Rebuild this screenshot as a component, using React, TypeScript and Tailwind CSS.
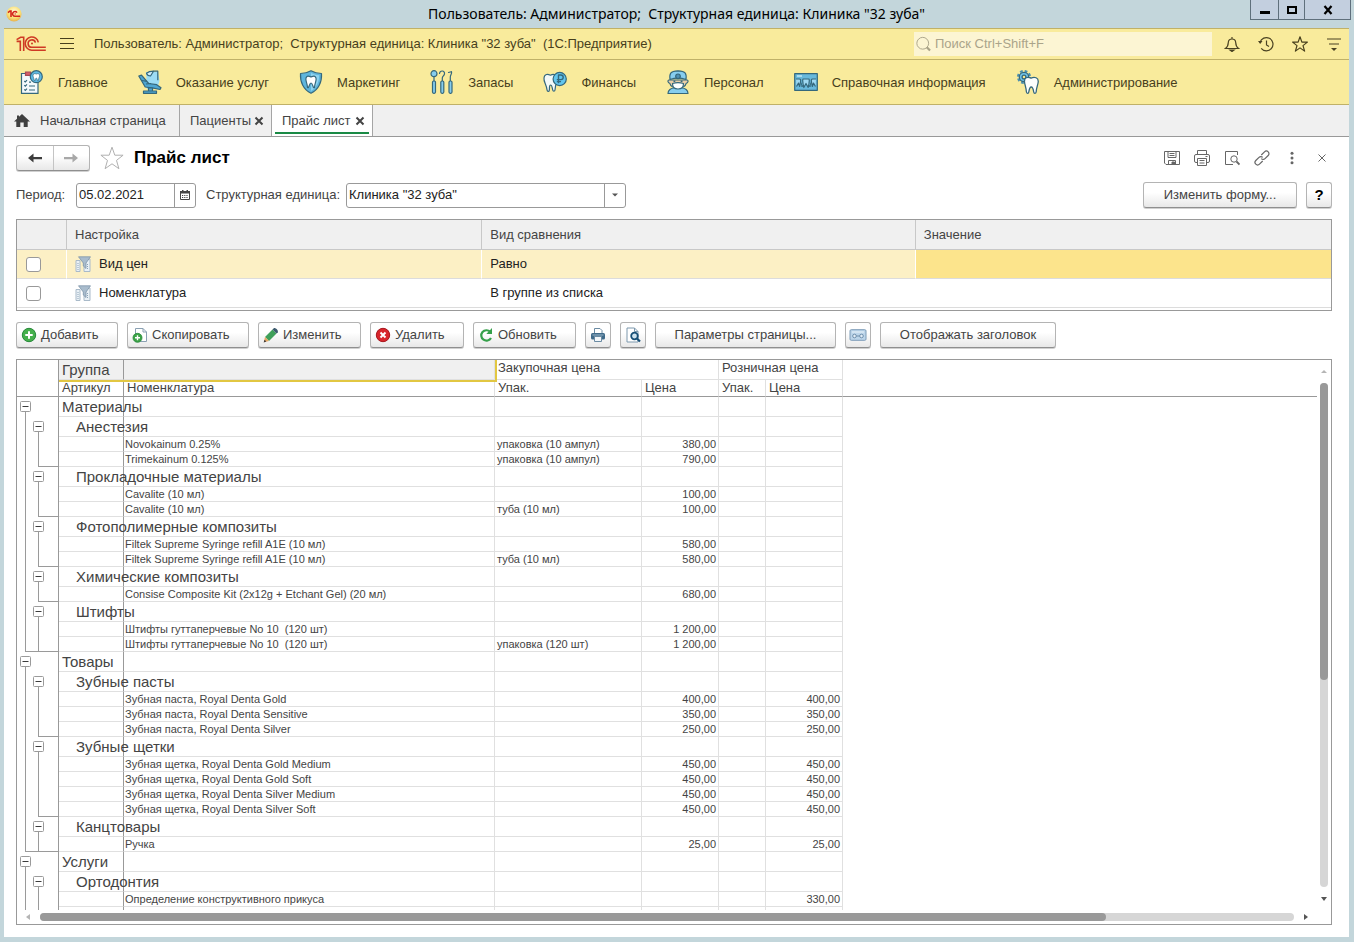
import React from "react";

type Svg = { className?: string };

const AppBadge = () => (
  <svg viewBox="0 0 16 16" className="size-4" aria-hidden="true">
    <defs>
      <radialGradient id="badge" cx="50%" cy="35%" r="65%">
        <stop offset="0" stopColor="#fffbe0" />
        <stop offset="0.6" stopColor="#fbe27a" />
        <stop offset="1" stopColor="#e8b04a" />
      </radialGradient>
    </defs>
    <circle cx="8" cy="8" r="7.6" fill="url(#badge)" />
    <path d="M2 6.6 4 5h1v6M7.5 10.2h6.6M11 6.6A2.4 2.4 0 1 0 9 10.3" stroke="#d4261c" strokeWidth="1.6" fill="none" />
    <circle cx="9.2" cy="7.9" r="0.7" fill="#d4261c" />
  </svg>
);

const Logo = () => (
  <svg viewBox="0 0 30 16" className="h-4 w-[30px]" fill="none" stroke="#cf3a24" strokeWidth="1.6" aria-hidden="true">
    <path d="M.6 3.6 4.6 1.300H7.700V15" />
    <path d="M.6 5.400H4.300V15" />
    <path d="M22.300 6.300A6.600 6.600 0 1 0 16 14.200H29.800" />
    <path d="M19.400 6.600A3.700 3.700 0 1 0 16 11.300H29.800" />
    <circle cx="16" cy="7.600" r="1" fill="#cf3a24" stroke="none" />
  </svg>
);

const line = "#35687c";
const sky = "#86cdee";

const IconMain = () => (
  <svg viewBox="0 0 24 24" className="size-6" fill="none" stroke={line} strokeWidth="1.2" aria-hidden="true">
    <path d="M1.500 3.500H18v19.800H1.500z" fill="#f4f9fb" />
    <path d="M5.500 2h5v3.400h-5z" fill="#d5606a" stroke="#a64a55" />
    <circle cx="16.300" cy="6.700" r="6" fill="#5fbbe6" />
    <path d="M13 5.200c.3-2 2-1.700 3.300-1.200 1.300-.5 3-.8 3.300 1.200.2 1.500-.9 2.500-1.200 5.300h-1c-.2-1.500-.5-2.300-1.100-2.300s-.9.8-1.100 2.300h-1C13.900 7.700 12.800 6.700 13 5.200z" fill="#fff" strokeWidth=".7" />
    <path d="m4.300 11 1 1L7 10.200M4.300 15.200l1 1L7 14.400M4.300 19.400l1 1L7 18.600M9 16h6M9 20h6M9 12.200h2" />
  </svg>
);

const IconChair = () => (
  <svg viewBox="0 0 24 24" className="size-6" fill={sky} stroke={line} strokeWidth="1.200" strokeLinejoin="round" aria-hidden="true">
    <path d="M8 2h12l1.500 9L19 19H9z" fill="#9cdcf5" stroke="none" />
    <path d="M15.500 1.200h4.300v9" fill="none" />
    <path d="M8.500 3.200c2-1.700 4.500-2 7-2L12.500 6c-2 0-3.500-1-4-2.800z" fill="#d4effa" />
    <path d="m.8 6 2.700-.8 7.200 8.300 8 1.200 4.300 3-1 1.800-6.500-1.300-8.300-1.200z" fill="#4ea6d2" />
    <path d="m4 10.500 5 .8M8 14l5-.5" fill="none" />
    <path d="M10.500 18h4v3h-4zM5.500 21h13v2.300h-13z" fill="#4ea6d2" />
  </svg>
);

const IconShield = () => (
  <svg viewBox="0 0 24 24" className="size-6" fill={sky} stroke={line} strokeWidth="1.2" strokeLinejoin="round" aria-hidden="true">
    <path d="M12 .8c3 1.800 6.500 2.700 10.500 2.700C23 12 19.500 20 12 23.300 4.500 20 1 12 1.500 3.500 5.500 3.500 9 2.600 12 .8z" fill="#5fb6dd" />
    <path d="M12 3c2.500 1.300 5 2 8.200 2.200C20 12 17.500 17.800 12 21z" fill="#8ed4f0" stroke="none" />
    <path d="M7 8c1-3 3.500-1.500 5-1.100 1.500-.4 4-1.900 5 1.100.8 2.800-1.200 4.300-1.500 9.500-1.600 1.300-1.700-4.500-3.500-4.500s-1.900 5.800-3.500 4.500C8.200 12.300 6.200 10.800 7 8z" fill="#fff" />
  </svg>
);

const IconTools = () => (
  <svg viewBox="0 0 24 24" className="size-6" fill="none" stroke={line} strokeWidth="1.200" strokeLinecap="round" aria-hidden="true">
    <circle cx="4" cy="3.700" r="3" fill={sky} />
    <path d="M4 6.700V12M9.500 3.500c.5-3.500 5.500-3.200 5 .3-.3 2-2.200 2.200-2.200 4.200v4M18.500 2.500l3-.8c.8 2-1.500 3.300-1.200 5.800V12" />
    <rect x="2.500" y="11" width="3" height="12.300" rx="1.200" fill={sky} />
    <rect x="10.800" y="11" width="3" height="12.300" rx="1.200" fill={sky} />
    <rect x="19" y="11" width="3" height="12.300" rx="1.200" fill={sky} />
  </svg>
);

const IconFinance = () => (
  <svg viewBox="0 0 24 24" className="size-6" fill="none" stroke={line} strokeWidth="1.200" strokeLinejoin="round" aria-hidden="true">
    <path d="M1 8c.5-4.500 4-4 6.500-2.800C10.500 3.500 14.500 4.500 14 9.500c-.5 3-1.500 5-2 10.500-.2 1.500-2 1.500-2.300 0-.5-2.500-.7-5-2.200-5s-.8 3.500-1.200 5.300c-.3 1.500-2 1.300-2.200-.2C3.300 14 .5 12 1 8z" fill="#f3f9f8" />
    <circle cx="16.700" cy="9" r="6.600" fill="#62c6ee" />
    <path d="M15.500 13.300V5h2.400a2.300 2.300 0 0 1 0 4.600h-4.100M13.800 11.600h4.200" strokeWidth="1.400" />
  </svg>
);

const IconStaff = () => (
  <svg viewBox="0 0 24 24" className="size-6" fill={sky} stroke={line} strokeWidth="1.200" strokeLinejoin="round" aria-hidden="true">
    <path d="M2 23.500c0-3.500 3-5.500 6-5.500h8c3 0 6 2 6 5.500z" />
    <path d="M3 10c-1.500 0-1.500 3 .8 3.300C5.500 19.500 18.500 19.500 20.200 13.300c2.300-.3 2.300-3.300.8-3.300z" fill="#eccfa6" />
    <path d="M4 9.500C3.300 4 4 1 12 .8 20 1 20.700 4 20 9.500 15 7.800 9 7.800 4 9.500z" />
    <circle cx="12" cy="6.300" r="2.300" fill="#4d90b4" />
    <path d="M6.500 13.500c3.500-1.200 7.500-1.200 11 0 0 4-2.500 5.500-5.500 5.500s-5.500-1.500-5.500-5.500z" fill="#fff" />
    <path d="M7.500 11.200h1.800M14.700 11.200h1.800" strokeWidth="1.500" />
  </svg>
);

const IconReference = () => (
  <svg viewBox="0 0 24 24" className="size-6" fill="none" stroke={line} strokeWidth="1.200" strokeLinejoin="round" aria-hidden="true">
    <path d="M.7 3.700h22.600v16.600H.7z" fill="#68b9dc" />
    <path d="M3 6h5" stroke="#d8f1fb" />
    <path d="M2 9h3.500c1 0 1.500 1 1 3l-.8 4.500L4.500 13 2.500 16.500M9 9h6c.8 1.500 0 2.500 0 4.500L14.200 17.500l-2.200-4-2.200 4L9 13.500c0-2-.8-3 0-4.500zM22 9h-3.500c-1 0-1.500 1-1 3l.8 4.500 1.200-3.500 2 3.500" fill="#9fd9f2" />
    <path d="M7.200 12.500 8 17l1-2M16.800 12.500 16 17l-1-2" strokeWidth=".9" />
  </svg>
);

const IconAdmin = () => (
  <svg viewBox="0 0 24 24" className="size-6" fill="none" stroke={line} strokeWidth="1.300" strokeLinejoin="round" aria-hidden="true">
    <circle cx="8" cy="7" r="6" stroke="#4a90b0" strokeWidth="2.200" strokeDasharray="2.700 2.010" />
    <circle cx="8" cy="7" r="4.700" fill="#6fc3e8" />
    <circle cx="8" cy="7" r="1.900" fill="#f9e990" />
    <path d="M8.500 12c-.5-4.500 3-5.500 6.500-3.900C18.500 6.500 22.700 7.500 22.200 12c-.3 3-1.600 4.500-2 9.800-.2 2-2.200 2-2.500.2-.4-2.700-.9-5-2.500-5s-1.900 2.300-2.400 5c-.3 1.800-2.200 1.800-2.400-.2-.5-5.300-1.600-6.800-1.900-9.800z" fill="#fcfdfd" />
  </svg>
);

const IconHome = () => (
  <svg viewBox="0 0 16 14" className="h-3.5 w-4" fill="#3f3f3f" aria-hidden="true">
    <path d="M8 0 16 7.500h-2.300V13H9.700V8.500H6.300V13H2.300V7.500H0L3 4.700V1.500h2v1.300z" />
  </svg>
);

const Cross = ({ className = "size-2.5" }: Svg) => (
  <svg viewBox="0 0 10 10" className={className} stroke="currentColor" fill="none" aria-hidden="true">
    <path d="m1.500 1.500 7 7m0-7-7 7" />
  </svg>
);

const StarShape = ({ className }: Svg) => (
  <svg viewBox="0 0 24 24" className={className} fill="none" stroke="currentColor" strokeLinejoin="round" aria-hidden="true">
    <path d="m12 1.200 2.800 8h8.300l-6.600 5.200 2.400 8.300L12 17.800l-6.900 4.900 2.400-8.300L.9 9.200h8.300z" />
  </svg>
);

const FilterIcon = () => (
  <svg viewBox="0 0 16 16" className="size-4" aria-hidden="true">
    <path d="M1 4.500h4v11H1zM9 3h6v12.500H9z" fill="#eaf1f6" stroke="#a9bac9" />
    <path d="M3 7v7M12.500 8v6" stroke="#8aa3b8" strokeDasharray="1 1" />
    <path d="M3.500.8h12L11 7v5.500L8.300 10V7z" fill="#a9bccd" stroke="#7f96aa" strokeWidth=".8" />
  </svg>
);

const PageGlass = ({ className }: Svg) => (
  <svg viewBox="0 0 16 16" className={className} fill="none" aria-hidden="true">
    <path d="M2 1h7.500L13 4.500V15H2z" fill="#fff" stroke="#7d98ad" />
    <path d="M9.500 1v3.500H13" stroke="#7d98ad" />
    <circle cx="9.500" cy="9" r="3.300" fill="#cfe3ee" stroke="#174f76" strokeWidth="1.800" />
    <path d="m12 11.500 3 3" stroke="#174f76" strokeWidth="2.200" />
  </svg>
);

const PrinterBlue = () => (
  <svg viewBox="0 0 16 16" className="size-4" aria-hidden="true">
    <path d="M4.500 1.500h5.500l2 2V7h-7.500z" fill="#fff" stroke="#6b8ba3" />
    <rect x="1" y="6" width="14" height="6.500" rx="1.500" fill="#3f6a89" />
    <path d="M2.500 8h11" stroke="#9db8cb" />
    <path d="M4.500 9.500h7v5h-7z" fill="#f3f7fa" stroke="#6b8ba3" />
  </svg>
);

const AddIcon = () => (
  <svg viewBox="0 0 16 16" className="size-4" aria-hidden="true">
    <circle cx="8" cy="8" r="6.700" fill="#45b04c" stroke="#26883a" />
    <path d="M8 4.300v7.400M4.300 8h7.400" stroke="#fff" strokeWidth="2" />
  </svg>
);

const CopyIcon = () => (
  <svg viewBox="0 0 16 16" className="size-4" aria-hidden="true">
    <path d="M3.500 1.500h7.500l3.500 3.500v9.500h-11z" fill="#fff" stroke="#8aa0b2" />
    <path d="M11 1.500V5h3.500" fill="none" stroke="#8aa0b2" />
    <circle cx="5.500" cy="10.800" r="4.500" fill="#3ba346" stroke="#26883a" strokeWidth=".8" />
    <path d="M5.500 8.300v5M3 10.800h5" stroke="#fff" strokeWidth="1.400" />
  </svg>
);

const PencilIcon = () => (
  <svg viewBox="0 0 16 16" className="size-4" aria-hidden="true">
    <path d="m2 10 7.500-7.500 4 4L6 14z" fill="#3fa05a" />
    <path d="m9.500 2.500 1.300-1.300c1.200-.8 4.800 1.800 4 4L13.500 6.500z" fill="#3c5a6e" />
    <path d="M2 10 6 14 .8 15.300z" fill="#e6a764" />
    <path d="m1.500 12.800 1.800 1.800-2.600.9z" fill="#3a3a3a" />
  </svg>
);

const DeleteIcon = () => (
  <svg viewBox="0 0 16 16" className="size-4" aria-hidden="true">
    <circle cx="8" cy="8" r="6.700" fill="#d8262c" stroke="#a8161d" />
    <path d="m5.500 5.500 5 5m0-5-5 5" stroke="#fff" strokeWidth="1.900" />
  </svg>
);

const RefreshIcon = () => (
  <svg viewBox="0 0 16 16" className="size-4" aria-hidden="true">
    <path d="M13 11a5.200 5.200 0 1 1-.8-6.200" fill="none" stroke="#35a04a" strokeWidth="2.200" />
    <path d="M14 1v6H8.300z" fill="#35a04a" />
  </svg>
);

const HeaderToggleIcon = () => (
  <svg viewBox="0 0 18 12" className="h-3 w-[18px]" aria-hidden="true">
    <rect x="1" y=".7" width="16" height="10.600" rx="1.200" fill="#bcd5ea" stroke="#7d9cb8" />
    <path d="M3 3h12" stroke="#e9f3fa" />
    <g fill="#e3eef7" stroke="#6f8fac">
      <circle cx="5.500" cy="7" r="1.800" />
      <circle cx="12.500" cy="7" r="1.800" />
      <path d="M7.300 7h3.400" />
    </g>
  </svg>
);

const sections = [
  { label: "Главное", icon: IconMain },
  { label: "Оказание услуг", icon: IconChair },
  { label: "Маркетинг", icon: IconShield },
  { label: "Запасы", icon: IconTools },
  { label: "Финансы", icon: IconFinance },
  { label: "Персонал", icon: IconStaff },
  { label: "Справочная информация", icon: IconReference },
  { label: "Администрирование", icon: IconAdmin },
];

type Row = {
  level: 1 | 2 | 3;
  name: string;
  pack?: string;
  buy?: string;
  retail?: string;
  end?: 1 | 2;
};

const rows: Row[] = [
  { level: 1, name: "Материалы" },
  { level: 2, name: "Анестезия" },
  { level: 3, name: "Novokainum 0.25%", pack: "упаковка (10 ампул)", buy: "380,00" },
  { level: 3, name: "Trimekainum 0.125%", pack: "упаковка (10 ампул)", buy: "790,00", end: 2 },
  { level: 2, name: "Прокладочные материалы" },
  { level: 3, name: "Cavalite (10 мл)", buy: "100,00" },
  { level: 3, name: "Cavalite (10 мл)", pack: "туба (10 мл)", buy: "100,00", end: 2 },
  { level: 2, name: "Фотополимерные композиты" },
  { level: 3, name: "Filtek Supreme Syringe refill A1E (10 мл)", buy: "580,00" },
  { level: 3, name: "Filtek Supreme Syringe refill A1E (10 мл)", pack: "туба (10 мл)", buy: "580,00", end: 2 },
  { level: 2, name: "Химические композиты" },
  { level: 3, name: "Consise Composite Kit (2x12g + Etchant Gel) (20 мл)", buy: "680,00", end: 2 },
  { level: 2, name: "Штифты" },
  { level: 3, name: "Штифты гуттаперчевые No 10  (120 шт)", buy: "1 200,00" },
  { level: 3, name: "Штифты гуттаперчевые No 10  (120 шт)", pack: "упаковка (120 шт)", buy: "1 200,00", end: 1 },
  { level: 1, name: "Товары" },
  { level: 2, name: "Зубные пасты" },
  { level: 3, name: "Зубная паста, Royal Denta Gold", buy: "400,00", retail: "400,00" },
  { level: 3, name: "Зубная паста, Royal Denta Sensitive", buy: "350,00", retail: "350,00" },
  { level: 3, name: "Зубная паста, Royal Denta Silver", buy: "250,00", retail: "250,00", end: 2 },
  { level: 2, name: "Зубные щетки" },
  { level: 3, name: "Зубная щетка, Royal Denta Gold Medium", buy: "450,00", retail: "450,00" },
  { level: 3, name: "Зубная щетка, Royal Denta Gold Soft", buy: "450,00", retail: "450,00" },
  { level: 3, name: "Зубная щетка, Royal Denta Silver Medium", buy: "450,00", retail: "450,00" },
  { level: 3, name: "Зубная щетка, Royal Denta Silver Soft", buy: "450,00", retail: "450,00", end: 2 },
  { level: 2, name: "Канцтовары" },
  { level: 3, name: "Ручка", buy: "25,00", retail: "25,00", end: 1 },
  { level: 1, name: "Услуги" },
  { level: 2, name: "Ортодонтия" },
  { level: 3, name: "Определение конструктивного прикуса", retail: "330,00" },
  { level: 3, name: "Установка несъемной техники" },
];

const Toggle = ({ name }: { name: string }) => (
  <button type="button" aria-label={`Свернуть: ${name}`} className="h-5 w-[11px] shrink-0">
    <svg viewBox="0 0 11 20" className="h-5 w-[11px]" fill="none" stroke="#9a9a9a" aria-hidden="true">
      <rect x=".5" y="4.500" width="10" height="10" rx="1" fill="#fff" />
      <path d="M2.500 9.500h6" stroke="#3c3c3c" />
      <path d="M5.500 15v5" />
    </svg>
  </button>
);

const Gutter = ({ row }: { row: Row }) => {
  if (row.level === 1) {
    return (
      <div className="flex h-5 pl-[3px]">
        <Toggle name={row.name} />
      </div>
    );
  }
  if (row.level === 2) {
    return (
      <div className="flex h-5 pl-2">
        <span className="w-2 border-l border-[#9a9a9a]" />
        <Toggle name={row.name} />
      </div>
    );
  }
  return (
    <div className="flex h-[15px] pl-2">
      <span className={`w-[13px] border-l border-[#9a9a9a] ${row.end === 1 ? "border-b" : ""}`} />
      <span className={`flex-1 border-l border-[#9a9a9a] ${row.end ? "border-b" : ""}`} />
    </div>
  );
};

const grid = "border-r border-b border-[#e0e0e0] p-0";
const dark = "border-r border-b border-r-[#999] border-b-[#e0e0e0] p-0";

const Sheet = () => (
  <table className="w-full table-fixed border-separate border-spacing-0 text-left whitespace-pre text-[#444]">
    <colgroup>
      <col className="w-[42px]" />
      <col className="w-[65px]" />
      <col className="w-[371px]" />
      <col className="w-[147px]" />
      <col className="w-[77px]" />
      <col className="w-[47px]" />
      <col className="w-[77px]" />
      <col />
    </colgroup>
    <thead className="text-[13px] leading-4 [&_th]:font-normal">
      <tr className="h-5">
        <th className="border-r border-[#999] p-0" />
        <th className={`${dark} bg-[#f0f0f0] pl-[3px] text-[15px]`}>Группа</th>
        <th className={`${grid} relative bg-[#f0f0f0]`}>
          <span className="absolute top-0 -right-[3px] -bottom-[3px] -left-[65px] border-r-2 border-b-2 border-[#e2c742]" />
        </th>
        <th colSpan={2} className={`${grid} pl-[3px] align-top`}>Закупочная цена</th>
        <th colSpan={2} className={`${grid} pl-[3px] align-top`}>Розничная цена</th>
        <th className="p-0" />
      </tr>
      <tr className="h-4 [&>th]:border-b [&>th]:border-b-[#999]">
        <th className="border-r border-[#999] p-0" />
        <th className={`${dark} pl-[3px]`}>Артикул</th>
        <th className={`${grid} pl-[3px]`}>Номенклатура</th>
        <th className={`${grid} pl-[3px]`}>Упак.</th>
        <th className={`${grid} pl-[3px]`}>Цена</th>
        <th className={`${grid} pl-[3px]`}>Упак.</th>
        <th className={`${grid} pl-[3px]`}>Цена</th>
        <th className="p-0" />
      </tr>
    </thead>
    <tbody className="text-[11px] leading-[14px]">
      {rows.map((row, i) => (
        <tr key={i} className={row.level === 3 ? "h-[15px]" : "h-5"}>
          <td className="border-r border-[#999] p-0 align-top">
            <Gutter row={row} />
          </td>
          {row.level === 3 ? (
            <>
              <td className={dark} />
              <td className={`${grid} pl-px`}>{row.name}</td>
            </>
          ) : (
            <>
              <td className={`${dark} text-[15px] leading-[19px] ${row.level === 1 ? "pl-[3px]" : "pl-[17px]"}`}>{row.name}</td>
              <td className={grid} />
            </>
          )}
          <td className={`${grid} pl-0.5`}>{row.pack}</td>
          <td className={`${grid} pr-0.5 text-right`}>{row.buy}</td>
          <td className={grid} />
          <td className={`${grid} pr-0.5 text-right`}>{row.retail}</td>
          <td className="p-0" />
        </tr>
      ))}
    </tbody>
  </table>
);

const face =
  "flex h-[26px] shrink-0 items-center rounded-[3px] border border-[#b4b4b4] border-b-[#8f8f8f] bg-linear-to-b from-white from-40% to-[#e8e8e8] shadow-[0_1px_0_#d0d0d0]";

const Tool = ({ icon, label, width }: { icon: React.ReactNode; label: string; width: string }) => (
  <button type="button" className={`${face} gap-1 pl-1 ${width}`}>
    {icon}
    <span>{label}</span>
  </button>
);

const Arrow = ({ d, fill = "#555" }: { d: string; fill?: string }) => (
  <svg viewBox="0 0 8 8" className="size-2 shrink-0" fill={fill} aria-hidden="true">
    <path d={d} />
  </svg>
);

export default function App() {
  return (
    <div className="flex h-screen flex-col bg-[#c3d6db] pr-[5px] pb-[5px] pl-1 font-['Liberation_Sans',Arial,sans-serif] text-[13px] leading-4 text-[#444]">
      <header className="grid h-7 shrink-0 grid-cols-[1fr_auto_1fr] items-center">
        <div className="pl-0.5">
          <AppBadge />
        </div>
        <h1 className="font-['Noto_Sans','Open_Sans',sans-serif] text-sm whitespace-pre text-black">
          {'Пользователь: Администратор;  Структурная единица: Клиника "32 зуба"'}
        </h1>
        <div className="-mr-0.5 flex h-5 self-start justify-self-end border-x border-b border-[#5f6f7c] bg-[#c3cfdf] text-black">
          <button type="button" aria-label="Свернуть" className="grid w-7 place-items-center border-r border-[#5f6f7c]">
            <svg viewBox="0 0 10 10" className="size-2.5" aria-hidden="true"><path d="M0 6h10v3H0z" /></svg>
          </button>
          <button type="button" aria-label="Развернуть" className="grid w-[26px] place-items-center border-r border-[#5f6f7c]">
            <svg viewBox="0 0 10 10" className="size-2.5" fill="none" stroke="#000" strokeWidth="2" aria-hidden="true"><path d="M1 2h8v6H1z" /></svg>
          </button>
          <button type="button" aria-label="Закрыть" className="grid w-[45px] place-items-center">
            <svg viewBox="0 0 10 10" className="size-2.5" stroke="#000" strokeWidth="2.200" aria-hidden="true"><path d="m1.500 1 7 8m0-8-7 8" /></svg>
          </button>
        </div>
      </header>

      <main className="flex min-h-0 flex-1 flex-col bg-white">
        <div className="flex h-8 shrink-0 items-center border-y border-[#c0b168] bg-[#f9eb9c] pl-3 text-[#473f1c]">
          <Logo />
          <button type="button" aria-label="Меню" className="ml-[13px]">
            <svg viewBox="0 0 16 12" className="h-3 w-4" stroke="#473f1c" aria-hidden="true"><path d="M1 .5h14M1 5.500h14M1 10.500h14" /></svg>
          </button>
          <span className="ml-[19px] whitespace-pre">
            {'Пользователь: Администратор;  Структурная единица: Клиника "32 зуба"  (1С:Предприятие)'}
          </span>
          <label className="ml-auto flex h-6 w-[298px] items-center gap-1 bg-[#fcf5d3] pl-0.5">
            <svg viewBox="0 0 16 16" className="size-4" fill="none" stroke="#a9a388" aria-hidden="true">
              <circle cx="7.200" cy="7.200" r="6.300" />
              <path d="m11.500 11.500 3.500 3.500" strokeWidth="2.400" />
            </svg>
            <input type="search" aria-label="Поиск" placeholder="Поиск Ctrl+Shift+F" className="w-full bg-transparent outline-none placeholder:text-[#aaa48a]" />
          </label>
          <div className="mr-[7px] ml-3 flex gap-[18px]">
            <button type="button" aria-label="Оповещения">
              <svg viewBox="0 0 16 16" className="size-4" fill="none" stroke="#4a4222" strokeWidth="1.200" aria-hidden="true">
                <path d="M1.500 12.500c2-1.500 2.700-3.500 2.800-6 .1-2.300 1.500-3.500 3.700-3.500s3.600 1.200 3.700 3.500c.1 2.500.8 4.500 2.800 6zM8 3V1" />
                <path d="M6 14h4l-2 1.500z" fill="#4a4222" />
              </svg>
            </button>
            <button type="button" aria-label="История">
              <svg viewBox="0 0 16 16" className="size-4" fill="none" stroke="#4a4222" strokeWidth="1.200" aria-hidden="true">
                <path d="M2 6.500a6.600 6.600 0 1 1 1.200 5.800M8.500 4.500V9l2.500 1.500" />
                <path d="M0 5h4.500L2.200 8z" fill="#4a4222" stroke="none" />
              </svg>
            </button>
            <button type="button" aria-label="Избранное">
              <StarShape className="size-4 stroke-[1.800]" />
            </button>
            <button type="button" aria-label="Настройки">
              <svg viewBox="0 0 16 16" className="size-4" fill="none" stroke="#4a4222" strokeWidth="1.200" aria-hidden="true">
                <path d="M1 3h14M3 8h10" />
                <path d="M5 12h6l-3 3z" fill="#4a4222" stroke="none" />
              </svg>
            </button>
          </div>
        </div>

        <nav className="flex h-[45px] shrink-0 items-center gap-[30px] border-b border-[#c0b168] bg-[#f9eb9c] pl-4 text-[#473f1c]">
          {sections.map(({ label, icon: Icon }) => (
            <button key={label} type="button" className="flex items-center gap-3.5 whitespace-nowrap">
              <Icon />
              <span className="pt-0.5">{label}</span>
            </button>
          ))}
        </nav>

        <div className="flex h-8 shrink-0 border-b border-[#999] bg-[#f0f0f0]">
          <a href="#home" className="flex w-44 items-center gap-2.5 border-r border-[#a5a5a5] pl-2.5">
            <IconHome />
            Начальная страница
          </a>
          <div className="flex w-[92px] items-center justify-between border-r border-[#a5a5a5] pr-[7px] pl-2.5">
            <a href="#patients">Пациенты</a>
            <button type="button" aria-label="Закрыть Пациенты"><Cross className="size-2.5 stroke-2" /></button>
          </div>
          <div className="flex w-[101px] flex-col border-r border-[#a5a5a5] bg-white px-[3px] pb-0.5">
            <div className="flex flex-1 items-center justify-between border-b-2 border-[#1a8a45] pt-1 pr-1 pl-[7px]">
              <a href="#prices">Прайс лист</a>
              <button type="button" aria-label="Закрыть Прайс лист"><Cross className="size-2.5 stroke-2" /></button>
            </div>
          </div>
        </div>

        <section className="flex min-h-0 flex-1 flex-col pr-[17px] pb-3 pl-3">
          <div className="flex h-[41px] shrink-0 items-center pr-0.5">
            <div className={`${face} w-[74px]`}>
              <button type="button" aria-label="Назад" className="grid h-full flex-1 place-items-center border-r border-[#c4c4c4]">
                <svg viewBox="0 0 14 10" className="h-2.5 w-3.5" aria-hidden="true"><path d="M0 5 5.500.5V4H14v2.200H5.500v3.300z" fill="#3c3c3c" /></svg>
              </button>
              <button type="button" aria-label="Вперед" className="grid h-full flex-1 place-items-center">
                <svg viewBox="0 0 14 10" className="h-2.5 w-3.5" aria-hidden="true"><path d="M14 5 8.500.5V4H0v2.200h8.500v3.300z" fill="#a8a8a8" /></svg>
              </button>
            </div>
            <button type="button" aria-label="В избранное" className="ml-2.5 text-[#b0b0b0]">
              <StarShape className="size-6 stroke-1" />
            </button>
            <h2 className="ml-2.5 text-[17px] font-bold text-black">Прайс лист</h2>
            <div className="ml-auto flex gap-3.5 text-[#666]">
              <button type="button" aria-label="Сохранить">
                <svg viewBox="0 0 16 16" className="size-4" fill="none" stroke="currentColor" aria-hidden="true">
                  <path d="M.5 1.500h15v13H2L.5 13zM4 1.500v6h8v-6M5.500 3.500h5M5.500 5.500h5M4.500 14.500v-4h7v4" />
                  <path d="M8 12h2.500v2.500H8z" fill="currentColor" />
                </svg>
              </button>
              <button type="button" aria-label="Печать">
                <svg viewBox="0 0 16 16" className="size-4" fill="none" stroke="currentColor" aria-hidden="true">
                  <path d="M3.500 4.500v-4h9v4M3.500 12.500H2a1.500 1.500 0 0 1-1.500-1.500V6A1.500 1.500 0 0 1 2 4.500h12A1.500 1.500 0 0 1 15.500 6v5a1.500 1.500 0 0 1-1.500 1.500h-1.500M3.500 8.500h9v7h-9zM5.500 10.500h5M5.500 13h5M11.500 6.500h2" />
                </svg>
              </button>
              <button type="button" aria-label="Просмотр">
                <svg viewBox="0 0 16 16" className="size-4" fill="none" stroke="currentColor" aria-hidden="true">
                  <path d="M13.500 5V1.500h-12v13H9" />
                  <circle cx="10" cy="9" r="3.200" />
                  <path d="m12.500 11.500 3 3" strokeWidth="1.800" />
                </svg>
              </button>
              <button type="button" aria-label="Ссылка">
                <svg viewBox="0 0 16 16" className="size-4" fill="none" stroke="currentColor" strokeWidth="1.200" aria-hidden="true">
                  <path d="M7.300 5 10.500 1.800a2.600 2.600 0 0 1 3.700 3.700L11 8.700a2.600 2.600 0 0 1-3.700 0M8.700 11l-3.200 3.200a2.600 2.600 0 0 1-3.700-3.700L5 7.300a2.600 2.600 0 0 1 3.700 0" />
                </svg>
              </button>
              <button type="button" aria-label="Ещё">
                <svg viewBox="0 0 16 16" className="size-4" fill="currentColor" aria-hidden="true">
                  <circle cx="8" cy="3.300" r="1.500" /><circle cx="8" cy="8" r="1.500" /><circle cx="8" cy="12.700" r="1.500" />
                </svg>
              </button>
              <button type="button" aria-label="Закрыть форму" className="grid size-4 place-items-center">
                <Cross />
              </button>
            </div>
          </div>

          <div className="flex h-[34px] shrink-0 items-center">
            <label htmlFor="period" className="w-[60px]">Период:</label>
            <div className="flex h-[25px] w-[120px] rounded-[3px] border border-[#999] bg-white">
              <input id="period" type="text" defaultValue="05.02.2021" className="w-full min-w-0 pl-0.5 text-[#222] outline-none" />
              <button type="button" aria-label="Календарь" className="grid w-[21px] shrink-0 place-items-center border-l border-[#999]">
                <svg viewBox="0 0 10 10" className="size-2.5" aria-hidden="true">
                  <path d="M.5 1.500h9v8h-9z" fill="none" stroke="#444" />
                  <path d="M0 1h10v2.500H0zM2 0h1.500v2H2zM6.500 0H8v2H6.500z" fill="#444" />
                  <path d="M2 5.500h6M2 7.500h6" stroke="#444" strokeDasharray="1.200 1" />
                </svg>
              </button>
            </div>
            <label htmlFor="unit" className="ml-2.5 w-[140px] whitespace-nowrap">Структурная единица:</label>
            <div className="relative h-[25px] w-[280px] rounded-[3px] border border-[#999] bg-white">
              <select id="unit" className="h-full w-full appearance-none bg-transparent pl-0.5 text-[#222] outline-none">
                <option>Клиника "32 зуба"</option>
              </select>
              <span className="pointer-events-none absolute inset-y-0 right-0 grid w-[21px] place-items-center border-l border-[#999]">
                <Arrow d="M1 2.500h6L4 5.500z" />
              </span>
            </div>
            <button type="button" className={`${face} ml-auto w-[154px] justify-center`}>Изменить форму...</button>
            <button type="button" className={`${face} ml-[9px] w-[26px] justify-center text-[15px] font-bold text-black`}>?</button>
          </div>

          <div className="mt-[7px] shrink-0 border border-[#999] pb-0.5">
            <table className="w-full table-fixed border-separate border-spacing-0 text-left">
              <colgroup>
                <col className="w-[50px]" />
                <col className="w-[31.6%]" />
                <col className="w-[33%]" />
                <col />
              </colgroup>
              <thead>
                <tr className="h-[30px] bg-[#f0f0f0] [&>th]:border-b [&>th]:border-[#c8c8c8] [&>th]:p-0 [&>th]:font-normal">
                  <th className="border-r" />
                  <th className="border-r"><span className="pl-2">Настройка</span></th>
                  <th className="border-r"><span className="pl-2">Вид сравнения</span></th>
                  <th><span className="pl-2">Значение</span></th>
                </tr>
              </thead>
              <tbody className="text-[#222]">
                <tr className="h-[29px] bg-[#fcf0c5] [&>td]:border-b [&>td]:border-b-[#dcdcdc] [&>td]:p-0">
                  <td className="border-r border-r-white">
                    <input type="checkbox" aria-label="Вид цен" className="ml-[9px] block size-[15px] appearance-none rounded-[3px] border border-[#999] bg-white" />
                  </td>
                  <td className="border-r border-r-white">
                    <span className="flex items-center gap-2 pl-2"><FilterIcon />Вид цен</span>
                  </td>
                  <td className="border-r border-r-white"><span className="pl-2">Равно</span></td>
                  <td className="bg-[#fce48c]" />
                </tr>
                <tr className="h-[29px] [&>td]:border-b [&>td]:border-b-[#dcdcdc] [&>td]:p-0">
                  <td>
                    <input type="checkbox" aria-label="Номенклатура" className="ml-[9px] block size-[15px] appearance-none rounded-[3px] border border-[#999] bg-white" />
                  </td>
                  <td>
                    <span className="flex items-center gap-2 pl-2"><FilterIcon />Номенклатура</span>
                  </td>
                  <td><span className="pl-2">В группе из списка</span></td>
                  <td />
                </tr>
              </tbody>
            </table>
          </div>

          <div className="mt-[11px] flex shrink-0 gap-[9px]">
            <Tool icon={<AddIcon />} label="Добавить" width="w-[102px]" />
            <Tool icon={<CopyIcon />} label="Скопировать" width="w-[122px]" />
            <Tool icon={<PencilIcon />} label="Изменить" width="w-[103px]" />
            <Tool icon={<DeleteIcon />} label="Удалить" width="w-[94px]" />
            <Tool icon={<RefreshIcon />} label="Обновить" width="w-[103px]" />
            <button type="button" aria-label="Печать" className={`${face} w-[26px] justify-center`}><PrinterBlue /></button>
            <button type="button" aria-label="Предварительный просмотр" className={`${face} w-[26px] justify-center`}><PageGlass className="size-4" /></button>
            <button type="button" className={`${face} w-[181px] justify-center`}>Параметры страницы...</button>
            <button type="button" aria-label="Колонтитулы" className={`${face} w-[26px] justify-center`}><HeaderToggleIcon /></button>
            <button type="button" className={`${face} w-44 justify-center`}>Отображать заголовок</button>
          </div>

          <div className="mt-[11px] flex min-h-0 flex-1 flex-col border border-[#999]">
            <div className="flex min-h-0 flex-1">
              <div className="min-w-0 flex-1 overflow-hidden">
                <Sheet />
              </div>
              <div className="flex w-3.5 flex-col items-center pt-[7px] pr-px pb-[7px]">
                <Arrow d="M1 6h6L4 3z" fill="#b5b5b5" />
                <div className="my-2 w-2 flex-1 rounded-full bg-[#d6d6d6]">
                  <div className="h-[59%] rounded-full bg-[#999]" />
                </div>
                <Arrow d="M1 2h6L4 6z" />
              </div>
            </div>
            <div className="flex h-3.5 shrink-0 items-center pr-[21px] pl-[7px]">
              <Arrow d="M6 1v6L2 4z" fill="#b5b5b5" />
              <div className="mx-2 h-2 flex-1 rounded-full bg-[#d6d6d6]">
                <div className="h-2 w-[85%] rounded-full bg-[#999]" />
              </div>
              <Arrow d="M2 1v6l4-3z" />
            </div>
          </div>
        </section>
      </main>
    </div>
  );
}
